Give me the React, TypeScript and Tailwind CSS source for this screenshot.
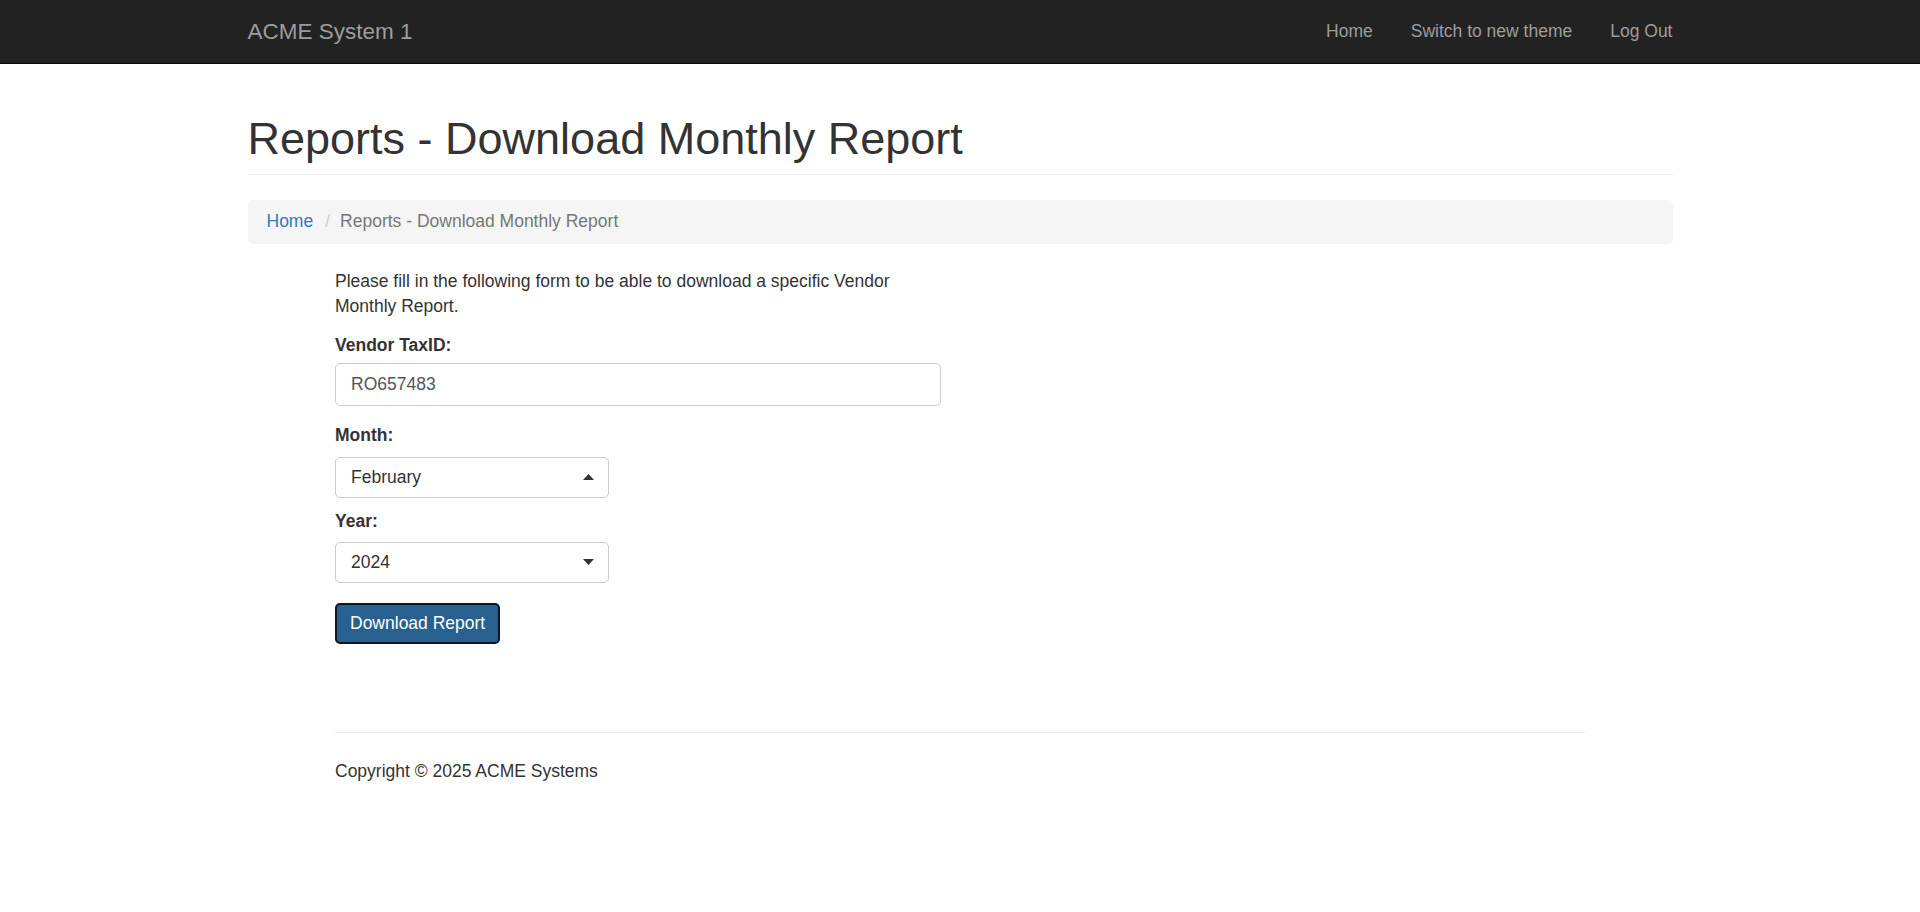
import React from 'react';

const Caret = ({ up }: { up?: boolean }) => (
  <svg width="11" height="6" viewBox="0 0 11 6" className="shrink-0">
    {up ? <path d="M0 6 L5.5 0 L11 6 Z" fill="#333" /> : <path d="M0 0 L5.5 6 L11 0 Z" fill="#333" />}
  </svg>
);

const SelectBox = ({ value, up }: { value: string; up?: boolean }) => (
  <div className="flex h-[41px] w-[274px] items-center justify-between rounded-[5px] border border-[#ccc] bg-white pl-[15px] pr-[14px] text-[17.5px] text-[#333]">
    <span>{value}</span>
    <Caret up={up} />
  </div>
);

const App = () => {
  return (
    <div className="min-h-screen bg-white text-[#333]" style={{ fontFamily: '"Liberation Sans", Arial, sans-serif' }}>
      <nav className="h-[64px] border-b border-[#080808] bg-[#222]">
        <div className="mx-auto flex h-full w-[1425px] items-center justify-between">
          <a className="text-[22.5px] text-[#9d9d9d]">ACME System 1</a>
          <ul className="-mr-[19px] flex items-center text-[17.5px] text-[#9d9d9d]">
            <li className="px-[19px]">Home</li>
            <li className="px-[19px]">Switch to new theme</li>
            <li className="px-[19px]">Log Out</li>
          </ul>
        </div>
      </nav>

      <div className="mx-auto w-[1425px]">
        <div className="mt-[50px] border-b border-[#eee] pb-[10px]">
          <h1 className="text-[45px] leading-[49.5px] font-normal text-[#333]">Reports - Download Monthly Report</h1>
        </div>

        <ol className="mt-[25px] flex h-[44px] items-center rounded-[5px] bg-[#f5f5f5] px-[19px] pb-[1px] text-[17.5px]">
          <li className="text-[#337ab7]">Home</li>
          <li className="pl-[12px] pr-[10px] text-[#ccc]">/</li>
          <li className="text-[#777]">Reports - Download Monthly Report</li>
        </ol>
      </div>

      <div className="mx-auto w-[1250px] text-[17.5px] leading-[25px]">
        <div className="w-[606px]">
          <p className="mt-[25px] mb-[14px]">
            Please fill in the following form to be able to download a specific Vendor Monthly Report.
          </p>

          <div className="mb-[17px]">
            <label className="mb-[5px] block font-bold">Vendor TaxID:</label>
            <div className="flex h-[43px] items-center rounded-[5px] border border-[#ccc] px-[15px] text-[#555]">RO657483</div>
          </div>

          <div className="mb-[11px]">
            <label className="mb-[9px] block font-bold">Month:</label>
            <SelectBox value="February" up />
          </div>

          <div className="mb-[20px]">
            <label className="mb-[8px] block font-bold">Year:</label>
            <SelectBox value="2024" />
          </div>

          <button className="h-[41px] rounded-[5px] border-2 border-[#0e1620] bg-[#286090] px-[13px] text-[17.5px] text-white">
            Download Report
          </button>
        </div>

        <div className="mt-[88px] border-t border-[#eee] pt-[26px]">
          <p>Copyright © 2025 ACME Systems</p>
        </div>
      </div>
    </div>
  );
};

export default App;
